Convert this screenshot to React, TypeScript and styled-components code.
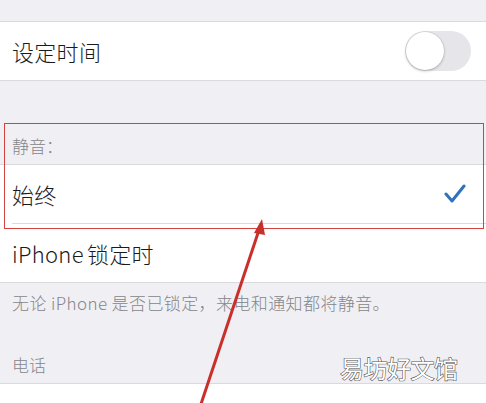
import React from "react";
import styled, { createGlobalStyle } from "styled-components";

const GlobalStyle = createGlobalStyle`
  html, body {
    margin: 0;
    padding: 0;
    background: #f0f0f4;
  }
  body {
    font-family: "Noto Sans CJK SC", "Noto Sans", sans-serif;
  }
`;

const App = () => {
  return (
    <>
      <GlobalStyle />
      <S.Page>
        <S.TopGap />
        <S.Group>
          <S.Row>
            <S.RowBody>
              <S.Label>设定时间</S.Label>
              <S.Switch>
                <S.Knob />
              </S.Switch>
            </S.RowBody>
          </S.Row>
        </S.Group>

        <S.SectionHeader $top={54}>静音：</S.SectionHeader>
        <S.Group>
          <S.Row>
            <S.RowBody $divider>
              <S.Label>始终</S.Label>
              <S.Check viewBox="0 0 22 20">
                <polyline points="2,10 8,17 20,2" />
              </S.Check>
            </S.RowBody>
          </S.Row>
          <S.Row>
            <S.RowBody>
              <S.Label>iPhone 锁定时</S.Label>
            </S.RowBody>
          </S.Row>
        </S.Group>

        <S.Footer>无论 iPhone 是否已锁定，来电和通知都将静音。</S.Footer>
        <S.SectionHeader $top={40}>电话</S.SectionHeader>
        <S.Group>
          <S.Row>
            <S.RowBody />
          </S.Row>
        </S.Group>

        {/* annotations drawn over the screenshot */}
        <S.Highlight />
        <S.Arrow viewBox="0 0 486 403">
          <line x1="199" y1="410" x2="259" y2="230" />
          <polygon points="262,219 254,233 265,235" />
        </S.Arrow>
        <S.Watermark>易坊好文馆</S.Watermark>
      </S.Page>
    </>
  );
};

export default App;

const S = {
  Page: styled.div`
    position: relative;
    width: 486px;
    height: 403px;
    overflow: hidden;
    background: #f0f0f4;
  `,
  TopGap: styled.div`
    height: 21px;
  `,
  Group: styled.div`
    background: #fff;
    border-top: 1px solid #dadade;
    border-bottom: 1px solid #dadade;
  `,
  Row: styled.div`
    padding-left: 12px;
  `,
  RowBody: styled.div<{ $divider?: boolean }>`
    height: 58px;
    display: flex;
    align-items: center;
    justify-content: space-between;
    border-bottom: ${(p) => (p.$divider ? "1px solid #dadade" : "none")};
  `,
  Label: styled.span`
    font-size: 22px;
    font-weight: 300;
    color: #1a1a1a;
    letter-spacing: 0.3px;
    word-spacing: -2px;
  `,
  Switch: styled.div`
    width: 66px;
    height: 40px;
    margin-right: 15px;
    border-radius: 20px;
    background: #e6e6ea;
    display: flex;
    align-items: center;
    padding-left: 1px;
    box-sizing: border-box;
  `,
  Knob: styled.div`
    width: 38px;
    height: 38px;
    border-radius: 50%;
    background: #fff;
    box-shadow: 0 1px 3px rgba(0, 0, 0, 0.25), 0 0 0 0.5px rgba(0, 0, 0, 0.08);
  `,
  Check: styled.svg`
    width: 22px;
    height: 20px;
    margin-right: 20px;
    fill: none;
    stroke: #2f72bd;
    stroke-width: 3;
    stroke-linecap: round;
    stroke-linejoin: round;
  `,
  SectionHeader: styled.div<{ $top: number }>`
    padding: ${(p) => p.$top}px 12px 7px;
    font-size: 17px;
    font-weight: 300;
    line-height: 22px;
    color: #86868a;
  `,
  Footer: styled.div`
    padding: 9px 12px 0;
    font-size: 17px;
    font-weight: 300;
    line-height: 22px;
    letter-spacing: 0.4px;
    color: #86868a;
    height: 22px;
    white-space: nowrap;
  `,
  Highlight: styled.div`
    position: absolute;
    left: 4px;
    top: 123px;
    width: 480px;
    height: 106px;
    box-sizing: border-box;
    border: 1.5px solid #d2433e;
    pointer-events: none;
  `,
  Arrow: styled.svg`
    position: absolute;
    left: 0;
    top: 0;
    width: 486px;
    height: 403px;
    pointer-events: none;
    line {
      stroke: #c8302c;
      stroke-width: 3;
    }
    polygon {
      fill: #c8302c;
    }
  `,
  Watermark: styled.div`
    position: absolute;
    left: 340px;
    top: 353px;
    font-size: 24px;
    line-height: 30px;
    color: #fff;
    -webkit-text-stroke: 1.2px #555;
    paint-order: stroke fill;
    letter-spacing: -0.5px;
  `,
};
